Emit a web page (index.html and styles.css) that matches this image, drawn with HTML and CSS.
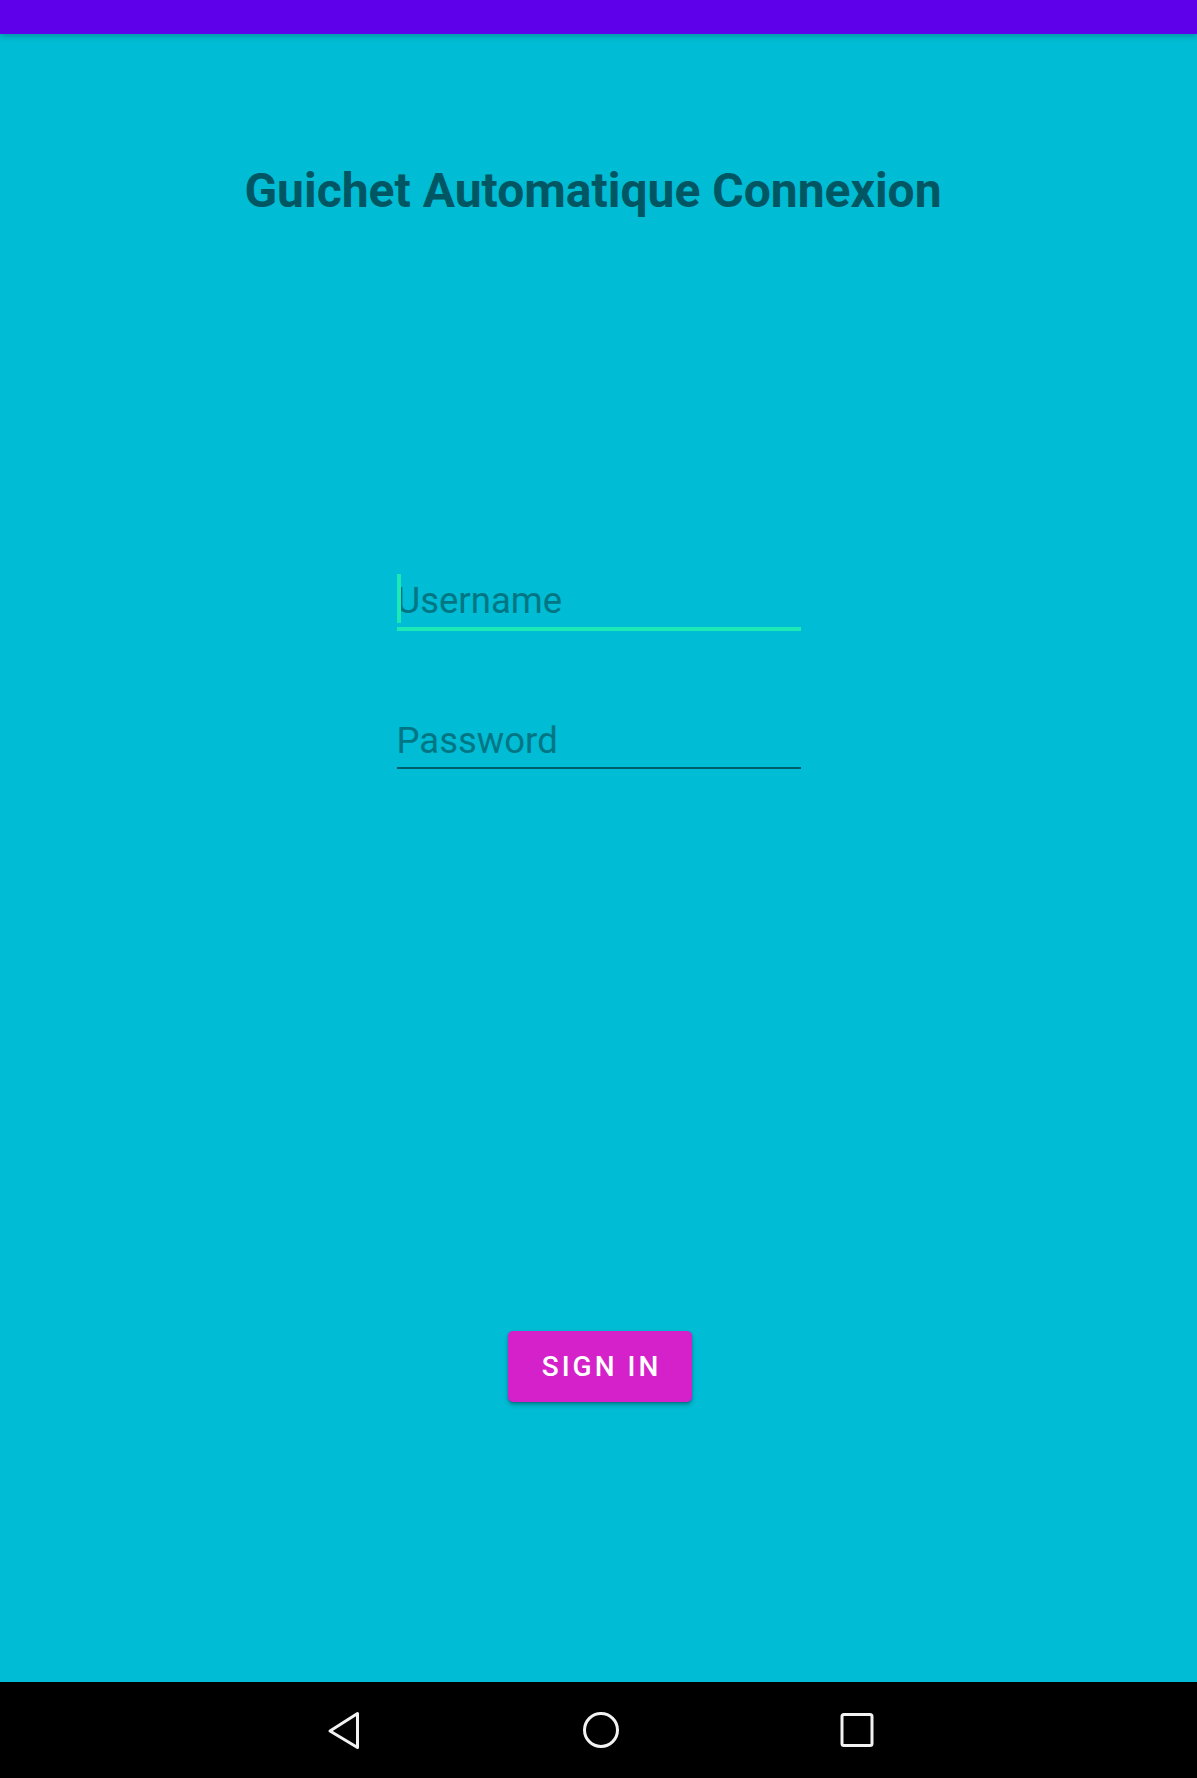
FILE: index.html
```html
<!DOCTYPE html>
<html lang="fr">
<head>
<meta charset="utf-8">
<title>Guichet Automatique Connexion</title>
<link rel="stylesheet" href="styles.css">
</head>
<body>
<div class="screen">
  <div class="status-bar"></div>
  <main class="content">
    <h1 class="title">Guichet Automatique Connexion</h1>
    <div class="form">
      <div class="field field-focused">
        <span class="cursor"></span>
        <span class="hint">Username</span>
      </div>
      <div class="field field-password">
        <span class="hint">Password</span>
      </div>
    </div>
    <button class="signin" type="button">SIGN IN</button>
  </main>
  <nav class="nav-bar">
    <svg class="nav-icon" width="40" height="40" viewBox="0 0 40 40">
      <path d="M32.5 3.5 L32.5 37.5 L5 21 Z" fill="none" stroke="#f2f2f2" stroke-width="3" stroke-linejoin="round"/>
    </svg>
    <svg class="nav-icon" width="40" height="40" viewBox="0 0 40 40">
      <circle cx="20" cy="20" r="16.5" fill="none" stroke="#f2f2f2" stroke-width="3"/>
    </svg>
    <svg class="nav-icon" width="40" height="40" viewBox="0 0 40 40">
      <rect x="5" y="4.5" width="30" height="31" rx="2" fill="none" stroke="#f2f2f2" stroke-width="3"/>
    </svg>
  </nav>
</div>
</body>
</html>
```
FILE: styles.css
```css
* { box-sizing: border-box; }
html, body {
  margin: 0;
  padding: 0;
  background: #00bcd4;
}
body {
  font-family: Roboto, "Noto Sans", "Liberation Sans", sans-serif;
}
.screen {
  width: 1197px;
  height: 1778px;
  display: flex;
  flex-direction: column;
  overflow: hidden;
}
.status-bar {
  height: 34px;
  flex: none;
  background: #5f00ea;
  box-shadow: 0 2px 6px rgba(0, 0, 0, 0.25);
  position: relative;
  z-index: 1;
}
.content {
  flex: 1;
  background: #00bcd4;
  display: flex;
  flex-direction: column;
  align-items: center;
  padding-top: 129px;
}
.title {
  margin: 0 11px 0 0;
  font-size: 48px;
  line-height: 56px;
  font-weight: 700;
  color: #005662;
  text-align: center;
}
.form {
  margin-top: 358px;
  width: 404px;
  display: flex;
  flex-direction: column;
  gap: 86px;
}
.field {
  position: relative;
  height: 54px;
  display: flex;
  align-items: flex-start;
  border-bottom: 2px solid #005e6b;
}
.field-password {
  height: 52px;
}
.field-focused {
  border-bottom: 4px solid #1de9b6;
}
.hint {
  font-size: 36.5px;
  line-height: 48px;
  color: #007684;
}
.cursor {
  position: absolute;
  left: 0;
  top: -3px;
  width: 4px;
  height: 49px;
  background: #1de9b6;
}
.signin {
  margin-top: 562px;
  margin-left: 3px;
  width: 184px;
  height: 71px;
  border: none;
  border-radius: 5px;
  background: #d521c9;
  color: #ffffff;
  font-family: Roboto, "Noto Sans", sans-serif;
  font-size: 28px;
  font-weight: 500;
  letter-spacing: 3px;
  padding: 0 0 0 3px;
  box-shadow: 0 3px 4px rgba(0, 0, 0, 0.25), 0 1px 2px rgba(0, 0, 0, 0.2);
  display: flex;
  align-items: center;
  justify-content: center;
}
.nav-bar {
  height: 96px;
  flex: none;
  background: #000000;
  display: flex;
  align-items: center;
  justify-content: center;
  gap: 216px;
  padding-left: 4px;
}
.nav-icon {
  display: block;
}
```
